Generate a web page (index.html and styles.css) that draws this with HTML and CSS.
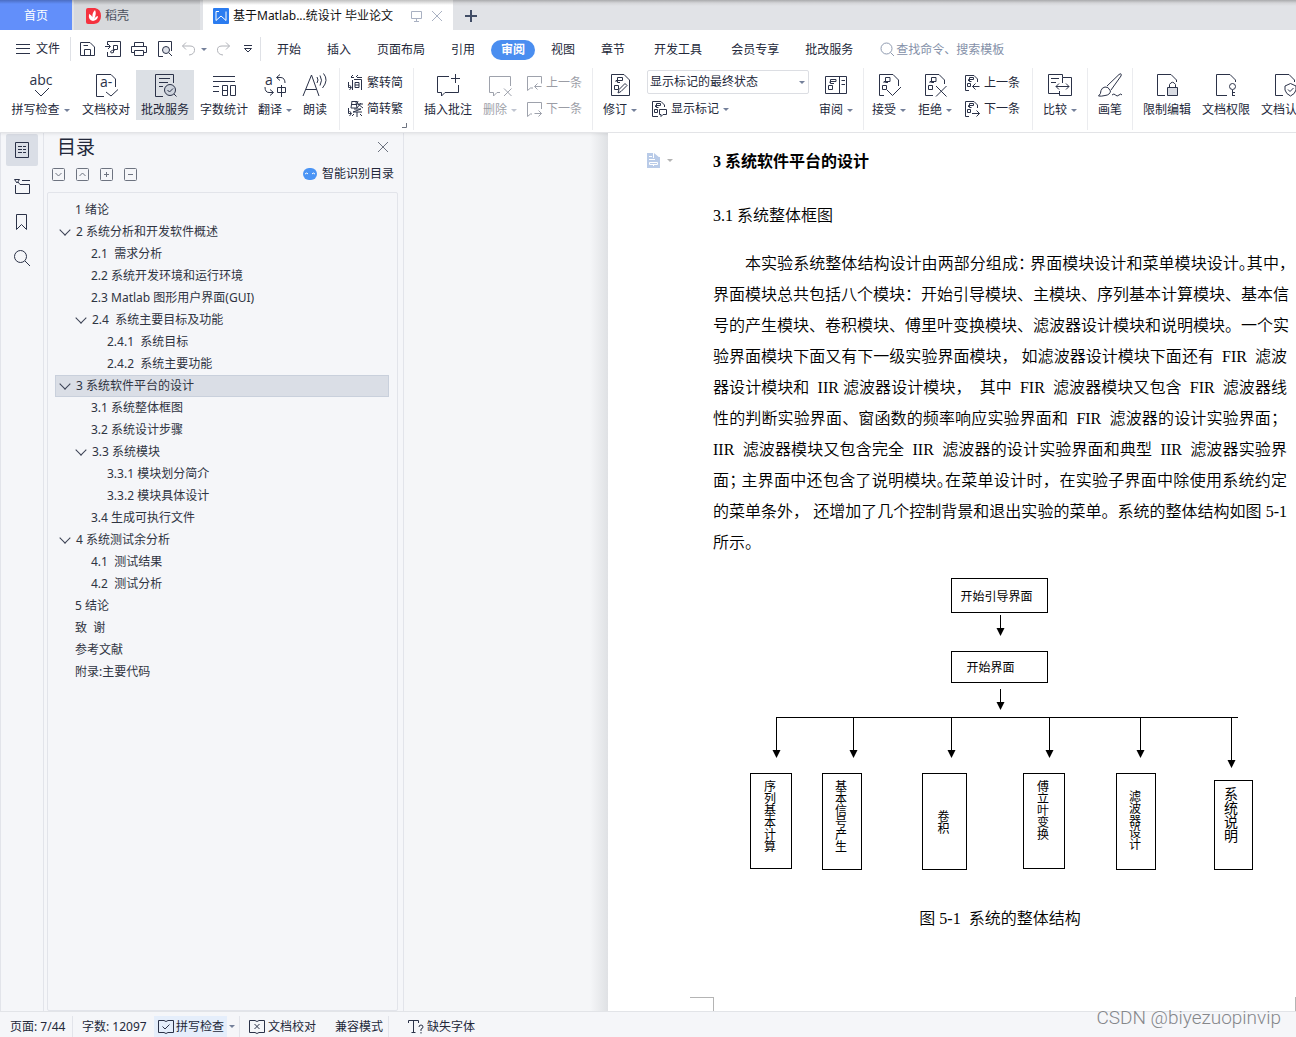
FILE: index.html
```html
<!DOCTYPE html>
<html lang="zh-CN">
<head>
<meta charset="utf-8">
<meta name="viewport" content="width=device-width, initial-scale=1">
<title>基于Matlab...统设计 毕业论文</title>
<link rel="stylesheet" href="styles.css">
</head>
<body>
<svg class="defs" aria-hidden="true">
  <symbol id="prev" viewBox="0 0 16 16"><path d="M7 13H4.500L1.500 15.500V1.500H15.500V8.500M15.500 11.500H9M11.500 8.500L8.500 11.500L11.500 14.500"/></symbol>
  <symbol id="next" viewBox="0 0 16 16"><path d="M6 13H4.500L1.500 15.500V1.500H15.500V8M8.500 12.500H15.500M12.500 9.500L15.500 12.500L12.500 15.500"/></symbol>
  <symbol id="rprev" viewBox="0 0 16 16"><path d="M5 15.500H1.500V.5H10L13.500 4V7M3.500 8.500H6.500V11.500H3.500ZM4.500 6V4.500H9.500V2.500H5.500V6.500H7.500M15.500 11.500H8.500M11.500 8.500L8.500 11.500L11.500 14.500"/></symbol>
  <symbol id="rnext" viewBox="0 0 16 16"><path d="M5 15.500H1.500V.5H10L13.500 4V7M3.500 8.500H6.500V11.500H3.500ZM4.500 6V4.500H9.500V2.500H5.500V6.500H7.500M8 12.500H15.500M12.500 9.500L15.500 12.500L12.500 15.500"/></symbol>
</svg>

<header class="app-top">
  <nav class="doc-tabs" aria-label="文档标签">
    <button class="doc-tab home">首页</button>
    <button class="doc-tab store">
      <svg width="15" height="16" viewBox="0 0 15 16"><path fill="#f5323f" d="M2 0H9Q15 1 15 8T8 16H2Q0 16 0 14V2Q0 0 2 0Z"/><path fill="#fff" d="M7 13Q2 12 3 6Q6 7 7 11Q5 6 9 2Q11 6 8 11Q10 8 12 8Q12 12 7 13Z"/></svg>
      <span>稻壳</span>
    </button>
    <button class="doc-tab active">
      <svg width="16" height="16" viewBox="0 0 16 16"><rect width="16" height="16" rx="1" fill="#2b7cf0"/><path d="M3 3.500V12.500L8 8L13 12.500V3.500M3 3.500H6" fill="none" stroke="#fff"/></svg>
      <span class="doc-name">基于Matlab...统设计 毕业论文</span>
      <svg class="line pale" width="12" height="12" viewBox="0 0 12 12"><path d="M.5 1.500H10.500V8.500H.5ZM5.500 8.500V11M3 11.500H8"/></svg>
      <svg class="line pale" width="12" height="12" viewBox="0 0 12 12"><path d="M1 1L11 11M11 1L1 11"/></svg>
    </button>
    <button class="doc-tab plus" aria-label="新建"><svg width="12" height="12" viewBox="0 0 12 12"><path d="M0 6H12M6 0V12" stroke="#414d66" stroke-width="2"/></svg></button>
  </nav>

  <div class="menu-row">
    <button class="file-btn">
      <svg class="line" width="14" height="12" viewBox="0 0 14 12"><path d="M0 1.500H14M0 5.500H14M0 10.500H14"/></svg>
      <span>文件</span>
    </button>
    <div class="quick">
      <button aria-label="保存"><svg class="line" width="16" height="16" viewBox="0 0 16 16"><path d="M1.500 14.500V1.500H11L15.500 6V14.500ZM5.500 14V8.500H11.500V14M4.500 4.500H9"/></svg></button>
      <button aria-label="输出为PDF"><svg class="line" width="16" height="16" viewBox="0 0 16 16"><path d="M2.500 4V.5H15.500V15.500H2.500V11M0 5.500H5M3 3L5.500 5.500L3 8M8.500 4.500H12.500V8.500H8.500V4.500M8.500 8.500V11.500Q5.500 13 5.500 10.500Q7 9 10 9"/></svg></button>
      <button aria-label="打印"><svg class="line" width="16" height="16" viewBox="0 0 16 16"><path d="M3.500 5V1.500H12.500V5M3.500 11.500H.5V5.500H15.500V11.500H12.500M3.500 9.500H12.500V14.500H3.500Z"/></svg></button>
      <button aria-label="打印预览"><svg class="line" width="16" height="16" viewBox="0 0 16 16"><path d="M6 15.500H1.500V.5H14.500V10"/><circle cx="9" cy="9" r="3.500" fill="#dde0e8"/><path d="M12 12L15 15"/></svg></button>
    </div>
    <button class="undo" aria-label="撤销"><svg class="line grey" width="14" height="14" viewBox="0 0 14 14"><path d="M4 .5L.5 4L4 7.500M.5 4H8Q13 4 12.500 8.500Q12 12.500 7 13"/></svg><i class="caret"></i></button>
    <button class="redo" aria-label="恢复"><svg class="line grey" width="14" height="14" viewBox="0 0 14 14"><path d="M10 .5L13.500 4L10 7.500M13.500 4H6Q1 4 1.500 8.500Q2 12.500 7 13"/></svg></button>
    <button class="more" aria-label="自定义"><svg class="line" width="10" height="8" viewBox="0 0 10 8"><path d="M1 .5H9M1.500 3.500H8.500L5 7Z"/></svg></button>
    <nav class="menu" aria-label="功能区">
      <button>开始</button><button>插入</button><button>页面布局</button><button>引用</button><button class="current"><span>审阅</span></button><button>视图</button><button>章节</button><button class="apart">开发工具</button><button class="apart">会员专享</button><button>批改服务</button>
    </nav>
    <label class="search">
      <svg width="15" height="15" viewBox="0 0 15 15" fill="none" stroke="#8f9bb0"><circle cx="6.500" cy="6.500" r="5.500"/><path d="M10.500 10.500L14 14"/></svg>
      <input type="text" placeholder="查找命令、搜索模板" aria-label="查找命令、搜索模板">
    </label>
  </div>

  <div class="ribbon">
    <div class="group first">
      <button class="tool w73">
        <svg class="line" width="26" height="24" viewBox="0 0 26 24"><text x="13" y="12" text-anchor="middle" class="glyph">abc</text><path d="M7 17L13 23L21 15"/></svg>
        <span>拼写检查<i class="caret"></i></span>
      </button>
      <button class="tool w58">
        <svg class="line" width="24" height="24" viewBox="0 0 24 24"><path d="M10 23.500H2.500V1.500H17L21.500 6V14M12 19L17 23L24 16.500"/><text x="6" y="14" class="glyph">a-</text></svg>
        <span>文档校对</span>
      </button>
      <button class="tool w58 on">
        <svg class="line" width="24" height="24" viewBox="0 0 24 24"><path d="M10 23.500H2.500V1.500H20.500V10M6 5.500H17M6 9.500H15M6 13.500H10"/><circle cx="17" cy="17" r="5.500" fill="#cdd3dc"/><path d="M14.500 17L16.500 19L20 15.500M21 21L23.500 23.500"/></svg>
        <span>批改服务</span>
      </button>
      <button class="tool w58">
        <svg class="line" width="24" height="24" viewBox="0 0 24 24"><path d="M1 3.500H23M1 8.500H23M1 13.500H7M1 18.500H7M10.500 12.500H15.500V22.500H10.500ZM10.500 17.500H15.500M18.500 12.500H23.500V22.500H18.500Z"/></svg>
        <span>字数统计</span>
      </button>
      <button class="tool w44">
        <svg class="line" width="24" height="24" viewBox="0 0 24 24"><text x="2" y="12" class="glyph">a</text><path d="M17 1.500L13.500 4.500L17 7.500M14 4.500H18Q22 5 22 10M2 14Q2 19.500 6 19.500H10M7 16.500L10.500 19.500L7 22.500M14.500 14.500H22.500V19.500H14.500ZM18.500 12V24"/></svg>
        <span>翻译<i class="caret"></i></span>
      </button>
      <button class="tool w36">
        <svg class="line" width="26" height="24" viewBox="0 0 26 24"><path d="M1 23L9.500 2L17 23M4 16.500H14.500M15 4Q17 7 15 10M18 2.500Q21 7 18 12.500M21.500 .5Q27 7 20.500 15"/></svg>
        <span>朗读</span>
      </button>
    </div>
    <div class="group stack w74">
      <button><svg class="line" width="16" height="18" viewBox="0 0 16 18"><path d="M4 3L6 1M4 3.500H7M9 3L11 1M10 3.500H15M5.500 6V16M7 5.500H14.500V16M8 8.500H12V13.500H8ZM8 11H12M1.500 8V13.500H4M2.500 11L4.500 13.500L2.500 16"/></svg>繁转简</button>
      <button><svg class="line" width="16" height="18" viewBox="0 0 16 18"><path d="M5 1.500H10M4 4.500H10M5 1L4 8H10L9 2M11 1L10 4H16M14 3L10 8M11 4L16 8M7 9H14L6 12H15M10 12V17M7 14L5 16M13 14L15 16M1.500 8V13.500H4M2.500 11L4.500 13.500L2.500 16"/></svg>简转繁</button>
      <svg class="launcher line thin" width="5" height="5" viewBox="0 0 5 5"><path d="M0 4.500H4.500V0"/></svg>
    </div>
    <div class="group">
      <button class="tool w68">
        <svg class="line" width="24" height="24" viewBox="0 0 24 24"><path d="M13 3.500H1.500V19.500H5.500V23L9 19.500H22.500V12M19.500 1V10M15 5.500H24"/></svg>
        <span>插入批注</span>
      </button>
      <button class="tool w36 off">
        <svg class="line" width="24" height="24" viewBox="0 0 24 24"><path d="M12 19.500H9L5.500 23V19.500H1.500V3.500H22.500V13M16 15.500L23.500 23M23.500 15.500L16 23"/></svg>
        <span>删除<i class="caret"></i></span>
      </button>
      <div class="stack w74 off">
        <button><svg class="line" width="16" height="16"><use href="#prev"/></svg>上一条</button>
        <button><svg class="line" width="16" height="16"><use href="#next"/></svg>下一条</button>
      </div>
    </div>
    <div class="group">
      <button class="tool w54">
        <svg class="line" width="24" height="24" viewBox="0 0 24 24"><path d="M3.500 1.500H16L21.500 7V22.500H3.500ZM6.500 12.500H10.500V16.500H6.500ZM8 9V7.500H14.500V4.500H9.500V9.500H12M10 20L11 16.500L17 10.500L19 12.500L13 18.500Z"/></svg>
        <span>修订<i class="caret"></i></span>
      </button>
      <div class="markup">
        <select aria-label="显示标记"><option>显示标记的最终状态</option></select>
        <button><svg class="line" width="16" height="16" viewBox="0 0 16 16"><path d="M7 15.500H1.500V.5H10L13.500 4V6M3.500 8.500H6.500V11.500H3.500ZM4.500 6V4.500H9.500V2.500H5.500V6.500H7.500M8.500 8.500H15.500V13.500H12L10 15.500V13.500H8.500Z"/></svg>显示标记<i class="caret"></i></button>
      </div>
      <button class="tool w54">
        <svg class="line" width="24" height="24" viewBox="0 0 24 24"><path d="M1.500 3.500H22.500V20.500H1.500ZM15.500 3.500V20.500M17.500 7.500H21M17.500 11.500H21M4.500 12.500H8.500V16.500H4.500ZM6 10V8.500H12V6.500H6.500V10.500H10"/></svg>
        <span>审阅<i class="caret"></i></span>
      </button>
    </div>
    <div class="group">
      <button class="tool w50">
        <svg class="line" width="24" height="24" viewBox="0 0 24 24"><path d="M7 22.500H2.500V1.500H16L21.500 7V13M5.500 12.500H9.500V16.500H5.500ZM7 10V8.500H13V4.500H8.500V9.500H11M10 17L15.500 22.500L24 14"/></svg>
        <span>接受<i class="caret"></i></span>
      </button>
      <button class="tool w42">
        <svg class="line" width="24" height="24" viewBox="0 0 24 24"><path d="M10 22.500H2.500V1.500H16L21.500 7V11M5.500 12.500H9.500V16.500H5.500ZM7 10V8.500H13V4.500H8.500V9.500H11M13 13L23.500 23.500M23.500 13L13 23.500"/></svg>
        <span>拒绝<i class="caret"></i></span>
      </button>
      <div class="stack w76">
        <button><svg class="line" width="16" height="16"><use href="#rprev"/></svg>上一条</button>
        <button><svg class="line" width="16" height="16"><use href="#rnext"/></svg>下一条</button>
      </div>
    </div>
    <div class="group">
      <button class="tool w54">
        <svg class="line" width="26" height="24" viewBox="0 0 26 24"><path d="M13 20.500H1.500V1.500H15.500V4.500H24.500V22.500H12.500V18M15.500 4.500V10M4 5.500H12M4 9.500H9M9 13.500H22M12 10.500L9 13.500L12 16.500M19 10.500L22 13.500L19 16.500"/></svg>
        <span>比较<i class="caret"></i></span>
      </button>
    </div>
    <div class="group">
      <button class="tool w44">
        <svg class="line" width="26" height="24" viewBox="0 0 26 24"><path d="M10 13L22 1.500Q25 -.5 24 3L14 17M8 14Q11 13 13.500 18Q13 22 8 22.500Q4 23.500 1.500 23Q4 21 4 17.500Q5 14.500 8 14ZM15 22Q17 20 18.500 22T22 22T25 22"/></svg>
        <span>画笔</span>
      </button>
    </div>
    <div class="group last">
      <button class="tool w58">
        <svg class="line" width="24" height="24" viewBox="0 0 24 24"><path d="M10 22.500H2.500V1.500H16L21.500 7V9M14.500 14V11.500Q17.500 7 20.500 11.500V14"/><path fill="#d9dce3" d="M12.500 14.500H22.500V22.500H12.500Z"/></svg>
        <span>限制编辑</span>
      </button>
      <button class="tool w58">
        <svg class="line" width="24" height="24" viewBox="0 0 24 24"><path d="M13 22.500H2.500V1.500H16L21.500 7V9M18.500 17V23M18.500 19.500H21M18.500 22.500H21"/><circle cx="18.500" cy="13.500" r="3"/></svg>
        <span>文档权限</span>
      </button>
      <button class="tool w58">
        <svg class="line" width="24" height="24" viewBox="0 0 24 24"><path d="M10 22.500H2.500V1.500H16L21.500 7V9M17.500 10.500L23 13V17Q22 21 17.500 23Q13 21 12 17V13ZM15 16.500L17 18.500L20.500 15"/></svg>
        <span>文档认证</span>
      </button>
    </div>
  </div>
</header>

<main class="workspace">
  <nav class="rail" aria-label="侧栏">
    <button class="on" aria-label="目录"><svg class="line" width="16" height="18" viewBox="0 0 16 18"><path d="M1.500 1.500H14.500V16.500H1.500ZM4 5.500H8M9 5.500H12M4 8.500H8M9 8.500H12M4 11.500H8M9 11.500H12"/></svg></button>
    <button aria-label="章节"><svg class="line" width="18" height="18" viewBox="0 0 18 18"><path d="M1.500 2.500H6.500L4 6ZM9 3.500H17M2.500 8V16.500H16.500V7.500H7L5 5"/></svg></button>
    <button aria-label="书签"><svg class="line" width="12" height="18" viewBox="0 0 12 18"><path d="M.5 1.500H10.500V16.500L5.500 11.500L.5 16.500Z"/></svg></button>
    <button aria-label="查找"><svg class="line" width="18" height="18" viewBox="0 0 18 18"><circle cx="7.500" cy="7.500" r="6"/><path d="M12 12L17 17"/></svg></button>
  </nav>

  <aside class="outline">
    <div class="outline-head">
      <h2>目录</h2>
      <button aria-label="关闭"><svg class="line thin" width="10" height="10" viewBox="0 0 10 10"><path d="M0 0L10 10M10 0L0 10"/></svg></button>
    </div>
    <div class="outline-tools">
      <button aria-label="展开"><svg class="line mid" width="13" height="13" viewBox="0 0 13 13"><rect x=".5" y=".5" width="12" height="12" rx="1"/><path d="M3.500 5L6.500 8L9.500 5"/></svg></button>
      <button aria-label="收起"><svg class="line mid" width="13" height="13" viewBox="0 0 13 13"><rect x=".5" y=".5" width="12" height="12" rx="1"/><path d="M3.500 8L6.500 5L9.500 8"/></svg></button>
      <button aria-label="增加"><svg class="line mid" width="13" height="13" viewBox="0 0 13 13"><rect x=".5" y=".5" width="12" height="12" rx="1"/><path d="M4 6.500H9M6.500 4V9"/></svg></button>
      <button aria-label="减少"><svg class="line mid" width="13" height="13" viewBox="0 0 13 13"><rect x=".5" y=".5" width="12" height="12" rx="1"/><path d="M4 6.500H9"/></svg></button>
      <button class="smart"><svg width="14" height="12" viewBox="0 0 14 12"><rect width="14" height="12" rx="6" fill="#4a94f5"/><path d="M2 6Q4 4 5 6M9 6Q10 4 12 6" fill="none" stroke="#fff"/></svg>智能识别目录</button>
    </div>
    <ul class="toc">
      <li class="l1"><a href="#">1 绪论</a></li>
      <li class="l1 open"><a href="#">2 系统分析和开发软件概述</a></li>
      <li class="l2"><a href="#">2.1&nbsp; 需求分析</a></li>
      <li class="l2"><a href="#">2.2 系统开发环境和运行环境</a></li>
      <li class="l2"><a href="#">2.3 Matlab 图形用户界面(GUI)</a></li>
      <li class="l2 open"><a href="#">2.4&nbsp; 系统主要目标及功能</a></li>
      <li class="l3"><a href="#">2.4.1&nbsp; 系统目标</a></li>
      <li class="l3"><a href="#">2.4.2&nbsp; 系统主要功能</a></li>
      <li class="l1 open selected"><a href="#">3 系统软件平台的设计</a></li>
      <li class="l2"><a href="#">3.1 系统整体框图</a></li>
      <li class="l2"><a href="#">3.2 系统设计步骤</a></li>
      <li class="l2 open"><a href="#">3.3 系统模块</a></li>
      <li class="l3"><a href="#">3.3.1 模块划分简介</a></li>
      <li class="l3"><a href="#">3.3.2 模块具体设计</a></li>
      <li class="l2"><a href="#">3.4 生成可执行文件</a></li>
      <li class="l1 open"><a href="#">4 系统测试余分析</a></li>
      <li class="l2"><a href="#">4.1&nbsp; 测试结果</a></li>
      <li class="l2"><a href="#">4.2&nbsp; 测试分析</a></li>
      <li class="l1"><a href="#">5 结论</a></li>
      <li class="l1"><a href="#">致&nbsp; 谢</a></li>
      <li class="l1"><a href="#">参考文献</a></li>
      <li class="l1"><a href="#">附录:主要代码</a></li>
    </ul>
  </aside>

  <section class="desk">
    <article class="paper">
      <button class="para-tool" aria-label="段落">
        <svg width="13" height="15" viewBox="0 0 13 15"><path fill="#b9cbe8" d="M0 0H6V5H10V15H0Z"/><path fill="#b9cbe8" d="M7 0L13 5H7ZM10 4H13V15H10Z"/><path d="M2 3.500H5M2 6.500H8M2.500 9.500H10.500V11.500H2.500ZM6.500 12V13" fill="none" stroke="#fff"/></svg><i class="caret faint"></i>
      </button>
      <h1>3 系统软件平台的设计</h1>
      <h2>3.1 系统整体框图</h2>
      <p class="prose">
        <span class="indent tight">本实验系统整体结构设计由两部分组成： 界面模块设计和菜单模块设计。其中，</span>
        <span>界面模块总共包括八个模块：开始引导模块、主模块、序列基本计算模块、基本信</span>
        <span>号的产生模块、卷积模块、傅里叶变换模块、滤波器设计模块和说明模块。一个实</span>
        <span>验界面模块下面又有下一级实验界面模块， 如滤波器设计模块下面还有  FIR  滤波</span>
        <span>器设计模块和  IIR 滤波器设计模块，  其中  FIR  滤波器模块又包含  FIR  滤波器线</span>
        <span>性的判断实验界面、窗函数的频率响应实验界面和  FIR  滤波器的设计实验界面；</span>
        <span>IIR  滤波器模块又包含完全  IIR  滤波器的设计实验界面和典型  IIR  滤波器实验界</span>
        <span class="tight">面； 主界面中还包含了说明模块。在菜单设计时，  在实验子界面中除使用系统约定</span>
        <span>的菜单条外， 还增加了几个控制背景和退出实验的菜单。系统的整体结构如图 5-1</span>
        <span class="end">所示。</span>
      </p>
      <figure>
        <div class="chart">
          <svg width="574" height="292" viewBox="0 0 574 292">
            <path d="M287.500 37V52M287.500 111V126M63.500 139.500V174M140.500 139.500V174M238.500 139.500V174M336.500 139.500V174M427.500 139.500V174M518.500 139.500V184M63 139.500H525" stroke="#000" fill="none"/>
            <path d="M283.500 50H291.500L287.500 58ZM283.500 124H291.500L287.500 132ZM59.500 172H67.500L63.500 180ZM136.500 172H144.500L140.500 180ZM234.500 172H242.500L238.500 180ZM332.500 172H340.500L336.500 180ZM423.500 172H431.500L427.500 180ZM514.500 182H522.500L518.500 190Z"/>
          </svg>
          <div class="node n1">开始引导界面</div>
          <div class="node n2">开始界面</div>
          <div class="node v v1">序列基本计算</div>
          <div class="node v v2">基本信号产生</div>
          <div class="node v v3">卷积</div>
          <div class="node v v4">傅立叶变换</div>
          <div class="node v v5">滤波器设计</div>
          <div class="node v v6">系统说明</div>
        </div>
        <figcaption>图 5-1&nbsp; 系统的整体结构</figcaption>
      </figure>
      <div class="crop-marks"><i></i><i></i></div>
    </article>
  </section>
</main>

<footer class="status">
  <span class="cell pages">页面: 7/44</span>
  <span class="cell words">字数: 12097</span>
  <button class="cell spell"><svg class="line" width="16" height="14" viewBox="0 0 16 14"><path d="M6 .5H.5V12.500H6L8 13.500L10 12.500H15.500V.5H10L8 1.500ZM4.500 6.500L7 9L11.500 4.500"/></svg>拼写检查</button>
  <button class="cell drop" aria-label="拼写选项"><i class="caret"></i></button>
  <button class="cell proof"><svg class="line" width="16" height="14" viewBox="0 0 16 14"><path d="M6 .5H.5V12.500H6L8 13.500L10 12.500H15.500V.5H10L8 1.500ZM5.500 4L10.500 9M10.500 4L5.500 9"/></svg>文档校对</button>
  <button class="cell compat">兼容模式</button>
  <button class="cell fonts"><svg class="line" width="16" height="14" viewBox="0 0 16 14"><path d="M.5 3V.5H10.500V3M5.500 .5V12.500M3.500 12.500H7.500M11 7Q11 5 13 5T15 7Q15 8.500 13 9V11M13 12V13.500"/></svg>缺失字体</button>
  <span class="watermark">CSDN @biyezuopinvip</span>
</footer>
</body>
</html>
```
FILE: styles.css
```css
* { box-sizing: border-box; }

body {
  margin: 0;
  min-height: 100vh;
  display: flex;
  flex-direction: column;
  overflow-x: hidden;
  background: #f5f6f9;
  color: #23283a;
  font: 12px/18px "Noto Sans", "Noto Sans CJK SC", sans-serif;
}

button, input, select {
  font: inherit;
  color: inherit;
  background: none;
  border: 0;
  padding: 0;
  margin: 0;
}

button {
  display: flex;
  align-items: center;
  white-space: nowrap;
  flex: none;
}

svg { flex: none; display: block; overflow: visible; }
.defs { position: absolute; width: 0; height: 0; }
.line { fill: none; stroke: #2b3248; }
.pale { stroke: #a9b1c2; }
.grey { stroke: #b0b2b8; }
.mid, .thin { stroke: #6d7380; }
.glyph { fill: #2b3248; stroke: none; font: 14px "Open Sans", sans-serif; }

.caret {
  flex: none;
  border: 3px solid transparent;
  border-top-color: #74809a;
  border-bottom: 0;
}
.caret.faint { border-top-color: #b3b3b3; }

/* window tabs */
.app-top {
  position: relative;
  background: #fff;
  border-bottom: 1px solid #e3e4e7;
  box-shadow: 0 1px 3px #00000014;
  overflow: hidden;
  flex: none;
}
.doc-tabs {
  display: flex;
  height: 30px;
  background: linear-gradient(#a9aaac, #d4d5d8 3px, #e1e3e7 6px);
}
.doc-tab { gap: 4px; padding: 2px 0 0 12px; }
.home { width: 72px; margin-right: 2px; padding: 2px 0 0; justify-content: center; background: linear-gradient(#4b6dc2, #628ffa 4px); color: #fff; }
.store { width: 126px; margin-right: 3px; background: linear-gradient(#a0a1a4, #d7d9dc 5px); color: #4a4f5c; }
.active { width: 250px; padding-left: 10px; background: linear-gradient(#c0c0c0, #fff 5px); color: #111; }
.doc-name { flex: 1; text-align: left; }
.active .pale:last-child { margin: 0 10px 0 4px; }
.active .pale { margin-left: 4px; }

/* menu */
.menu-row { display: flex; align-items: center; height: 38px; }
.file-btn { gap: 6px; width: 71px; height: 24px; padding-left: 16px; border-right: 1px solid #dfe1e6; }
.quick { display: flex; gap: 10px; padding-left: 8px; }
.undo { margin-left: 9px; gap: 5px; }
.redo { margin-left: 9px; }
.more { height: 24px; width: 31px; padding-left: 13px; border-right: 1px solid #dfe1e6; }
.menu { display: flex; padding: 1px 0 0 3px; }
.menu button { padding: 0 13px; height: 20px; }
.menu .apart { margin-left: 3px; }
.menu .current { padding: 0 3px; }
.current span { padding: 1px 10px; border-radius: 10px; background: #4a8ef0; color: #fff; font-weight: 700; }
.search { display: flex; align-items: center; gap: 1px; margin-left: 14px; flex: 1; }
.search input { flex: 1; min-width: 0; height: 20px; }
.search input::placeholder { color: #8490a8; opacity: 1; }

/* ribbon */
.ribbon { display: flex; height: 64px; }
.group { display: flex; flex: none; height: 62px; padding-top: 2px; border-left: 1px solid #ebecef; }
.group.first { padding-left: 4px; border: 0; }
.group.first .w36 { margin-right: 6px; }
.group.last { padding-left: 5px; gap: 1px; }
.tool { flex-direction: column; height: 50px; padding-top: 3px; gap: 4px; }
.tool span { display: flex; align-items: center; gap: 4px; }
.tool.on { background: #dce0e5; margin: 0 1px; }
.off { opacity: .45; }
.w36 { width: 36px; }
.w42 { width: 42px; }
.w44 { width: 44px; }
.w50 { width: 50px; }
.w54 { width: 54px; }
.w58 { width: 58px; }
.w68 { width: 68px; }
.w73 { width: 73px; }
.w74 { width: 74px; }
.w76 { width: 76px; }
.stack { display: flex; flex-direction: column; gap: 8px; padding: 4px 0 0 8px; position: relative; }
.stack button { gap: 4px; height: 18px; }
.group.stack { padding-top: 6px; padding-left: 7px; }
.launcher { position: absolute; right: 6px; bottom: 2px; }
.markup { position: relative; display: flex; flex-direction: column; gap: 6px; width: 162px; }
.markup select {
  height: 24px;
  padding: 0 2px;
  border: 1px solid #dcdee3;
  border-radius: 2px;
  appearance: none;
}
.markup::after {
  content: "";
  position: absolute;
  right: 4px;
  top: 11px;
  border: 3px solid transparent;
  border-top-color: #74809a;
  border-bottom: 0;
}
.markup button { gap: 4px; padding-left: 4px; }

/* workspace */
.workspace { display: flex; flex: 1; }
.rail {
  flex: none;
  display: flex;
  flex-direction: column;
  gap: 4px;
  width: 44px;
  padding: 1px 5px;
  border: solid #e2e4ea;
  border-width: 0 1px;
}
.rail button { width: 32px; height: 32px; justify-content: center; border-radius: 2px; }
.rail .on { background: #dadee6; }

.outline {
  flex: none;
  display: flex;
  flex-direction: column;
  width: 360px;
  padding: 0 5px 0 3px;
  border-right: 1px solid #e2e4ea;
}
.outline-head { display: flex; justify-content: space-between; align-items: center; height: 28px; padding: 0 10px; }
.outline-head h2 { margin: 0; font-size: 19px; line-height: 28px; font-weight: 400; }
.outline-tools { display: flex; align-items: center; gap: 11px; height: 26px; padding: 0 4px 0 5px; }
.smart { gap: 5px; margin-left: auto; }
.toc {
  flex: 1;
  margin: 5px 0 0;
  padding: 6px 8px 0 7px;
  list-style: none;
  border: 1px solid #e2e4ea;
  border-radius: 2px;
}
.toc li { display: flex; align-items: center; height: 22px; padding-left: 20px; }
.toc .l2 { padding-left: 36px; }
.toc .l3 { padding-left: 52px; }
.toc a { color: #2f3442; text-decoration: none; }
.toc .open::before {
  content: "";
  width: 7px;
  height: 7px;
  margin: -4px 7px 0 -14px;
  border: solid #3a4054;
  border-width: 0 1px 1px 0;
  transform: rotate(45deg);
}
.toc .selected { background: #dadee6; outline: 1px solid #c9d0dc; outline-offset: -1px; }

.desk { flex: 1; min-width: 0; display: flex; padding-left: 204px; background: linear-gradient(90deg, #f5f6f8, #f5f6f8 186px, #dfe1e4 204px); }
.paper {
  flex: 1;
  min-width: 0;
  display: flex;
  flex-direction: column;
  position: relative;
  padding: 17px 9px 0 105px;
  background: #fff;
  color: #000;
  font: 350 16px/24px "Liberation Serif", "Noto Sans CJK SC", serif;
}
.para-tool { position: absolute; left: 39px; top: 20px; gap: 7px; }
.paper h1, .paper h2 { margin: 0; font-size: 16px; line-height: 24px; }
.paper h1 { margin-bottom: 30px; }
.paper h2 { margin-bottom: 20px; font-weight: 350; }
.prose { margin: 0; line-height: 31px; }
.prose span { display: block; white-space: pre; text-align: justify; text-align-last: justify; }
.prose .indent { padding-left: 32px; }
.prose .tight { font-feature-settings: "halt"; }
.prose .end { text-align-last: left; }

figure { margin: 20px 0 0; display: flex; flex-direction: column; align-items: center; gap: 37px; }
.chart { position: relative; width: 575px; height: 292px; font: 12px/14px "Noto Sans CJK SC", sans-serif; }
.node { position: absolute; display: flex; align-items: center; border: 1px solid #000; white-space: nowrap; }
.n1 { left: 238px; top: 0; width: 97px; height: 35px; padding-left: 9px; }
.n2 { left: 238px; top: 73px; width: 97px; height: 32px; padding-left: 15px; }
.v { writing-mode: vertical-rl; line-height: 18px; padding: 6px 2px 0 0; }
.v1 { left: 37px; top: 195px; width: 42px; height: 96px; }
.v2 { left: 109px; top: 195px; width: 40px; height: 97px; }
.v3 { left: 209px; top: 195px; width: 45px; height: 97px; justify-content: center; padding-top: 0; }
.v4 { left: 310px; top: 195px; width: 42px; height: 96px; }
.v5 { left: 403px; top: 195px; width: 40px; height: 97px; padding-top: 16px; }
.v6 { left: 501px; top: 202px; width: 39px; height: 90px; font-size: 14px; padding-right: 4px; }
figcaption { line-height: 24px; }

.crop-marks { display: flex; justify-content: space-between; margin: auto -9px 0 -23px; }
.crop-marks i { height: 14px; border: solid #b4b4b4; border-width: 1px 1px 0 0; width: 24px; }
.crop-marks i:last-child { border-width: 1px 0 0 1px; width: 1px; }

/* status bar */
.status {
  position: relative;
  flex: none;
  display: flex;
  align-items: center;
  height: 26px;
  padding-top: 4px;
  border-top: 1px solid #e2e4e8;
}
.cell { display: flex; align-items: center; height: 22px; gap: 2px; white-space: nowrap; }
.pages { width: 73px; padding-left: 10px; border-right: 1px solid #e2e4ea; }
.words { width: 81px; padding-left: 9px; }
.spell { width: 73px; padding-left: 4px; background: #e5eefb; }
.drop { width: 13px; padding-left: 2px; border-right: 1px solid #e2e4ea; }
.proof { padding-left: 9px; gap: 3px; }
.compat { padding: 0 5px 0 19px; border-right: 1px solid #e2e4ea; }
.fonts { padding-left: 19px; gap: 3px; }
.watermark { position: absolute; right: 15px; bottom: 8px; font: 300 19px/22px Roboto, sans-serif; color: #85878b; }
```
